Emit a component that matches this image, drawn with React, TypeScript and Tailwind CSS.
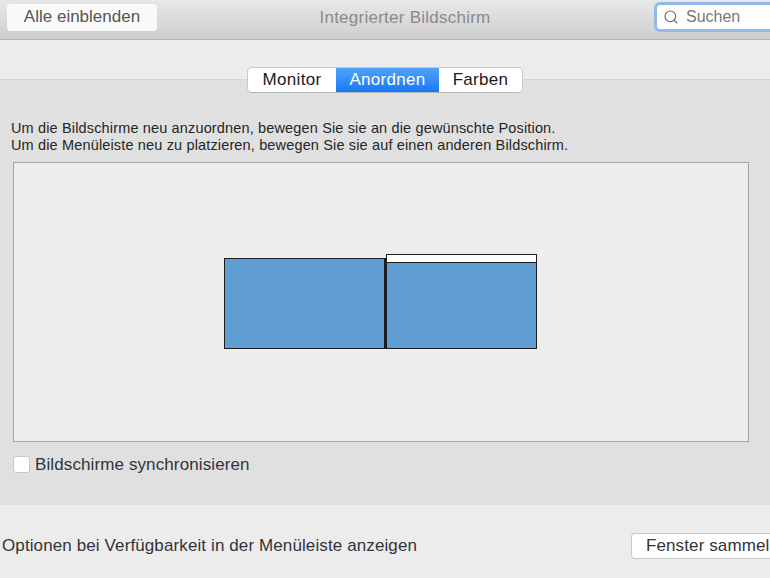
import { Search } from "lucide-react";

const font = "font-['Liberation_Sans',Arial,sans-serif]";

function Toolbar() {
  return (
    <div className="h-[40px] shrink-0 flex items-center bg-gradient-to-b from-[#e9e8e9] to-[#cfcecf] border-b border-[#b3b2b3] pl-[7px]">
      <button className="w-[150px] h-[27px] mb-[5px] bg-[#fafafa] rounded-[4px] text-[#555] text-[17px] text-center">
        Alle einblenden
      </button>
      <div className="w-[345px] pl-[151px] text-center text-[#8a8a8a] text-[17px] tracking-[0.25px] whitespace-nowrap mb-[3px]">
        Integrierter Bildschirm
      </div>
      <div className="ml-auto w-[116px] h-[30px] mb-[5px] border-[3px] border-r-0 border-[#8fbbe6] rounded-l-[6px] bg-white flex items-center pl-[6px] gap-[7px] text-[#777] text-[16px]">
        <Search size={16} strokeWidth={1.7} className="text-[#666]" />
        <span>Suchen</span>
      </div>
    </div>
  );
}

function Tabs() {
  return (
    <div className="h-[26px] flex bg-white rounded-[5px] border border-[#c9c9c9] border-b-[#b5b5b5] overflow-hidden text-[17px] tracking-[0.3px] relative z-10">
      <div className="w-[88px] flex items-center justify-center text-[#1a1a1a]">Monitor</div>
      <div className="w-[103px] flex items-center justify-center text-white bg-gradient-to-b from-[#4fa3f7] to-[#1478f6]">Anordnen</div>
      <div className="w-[83px] flex items-center justify-center text-[#1a1a1a]">Farben</div>
    </div>
  );
}

function Arrangement() {
  return (
    <div className="relative ml-[13px] w-[736px] h-[280px] bg-[#eeeeee] border border-[#a3a3a3]">
      <div className="absolute left-[210px] top-[95px] w-[162px] h-[91px] bg-[#5f9dd3] border border-[#1c1c1c] border-r-2" />
      <div className="absolute left-[372px] top-[91px] w-[151px] h-[95px] bg-[#5f9dd3] border border-[#1c1c1c]">
        <div className="h-[7px] bg-white border-b border-[#1c1c1c] box-content" />
      </div>
    </div>
  );
}

export default function App() {
  return (
    <div className={`w-[770px] h-[578px] overflow-hidden flex flex-col bg-[#ececec] ${font}`}>
      <Toolbar />
      <div className="h-[39px] shrink-0 relative">
        <div className="absolute left-[247px] top-[27px]">
          <Tabs />
        </div>
      </div>
      <div className="h-[426px] shrink-0 bg-[#e0e0e0] border-t border-[#d6d6d6]">
        <div className="pl-[11px] pt-[40px] h-[82px] text-[14.5px] leading-[17px] text-[#262626] tracking-[0.15px] whitespace-nowrap">
          <p>Um die Bildschirme neu anzuordnen, bewegen Sie sie an die gewünschte Position.</p>
          <p>Um die Menüleiste neu zu platzieren, bewegen Sie sie auf einen anderen Bildschirm.</p>
        </div>
        <Arrangement />
        <div className="flex items-center gap-[5px] ml-[13px] mt-[10px] text-[17px] text-[#33333b] tracking-[0.11px]">
          <div className="w-[17px] h-[17px] bg-white rounded-[3px] border border-[#c8c8c8]" />
          Bildschirme synchronisieren
        </div>
      </div>
      <div className="flex items-center flex-1 pl-[2px] pt-[9px] text-[17px] text-[#33333b] tracking-[0.11px] whitespace-nowrap">
        <span>Optionen bei Verfügbarkeit in der Menüleiste anzeigen</span>
        <div className="ml-auto -mt-[1px] w-[139px] h-[26px] shrink-0 bg-white rounded-l-[4px] border border-[#c8c8c8] border-r-0 pl-[14px] flex items-center overflow-hidden">
          Fenster sammeln
        </div>
      </div>
    </div>
  );
}
